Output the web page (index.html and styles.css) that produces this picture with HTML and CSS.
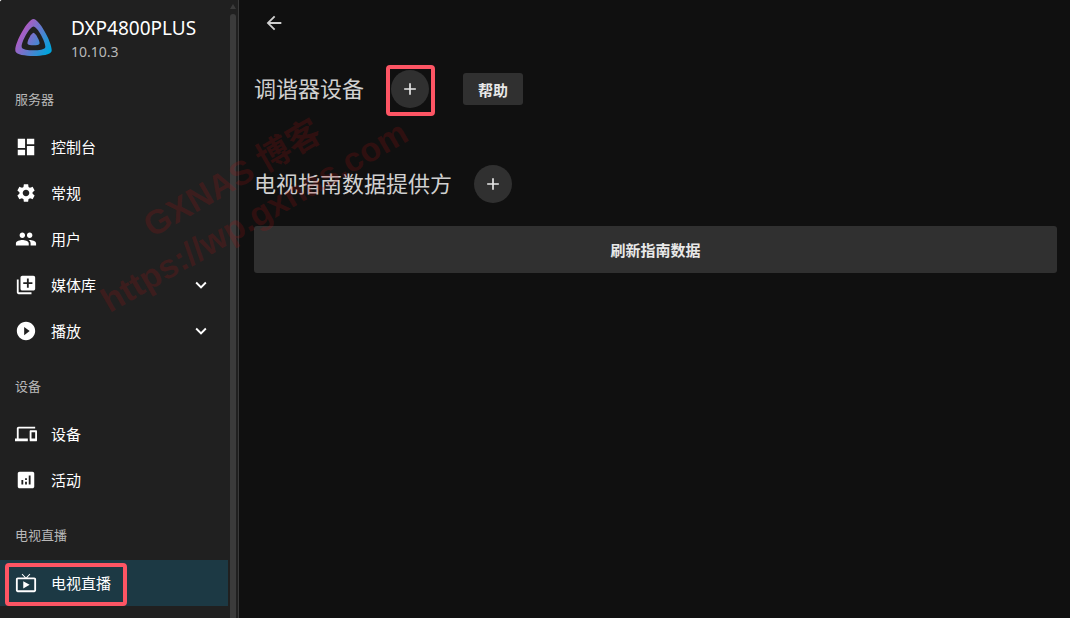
FILE: index.html
```html
<!DOCTYPE html>
<html lang="zh-CN">
<head>
  <meta charset="UTF-8" />
  <meta name="viewport" content="width=device-width, initial-scale=1.0" />
  <title>电视直播</title>
  <link rel="stylesheet" href="styles.css">
</head>
<body>
  <div class="app">
    <aside class="sidebar">
      <div class="drawer">
        <header class="server">
          <svg class="logo" viewBox="0 0 37 37" aria-hidden="true">
            <defs>
              <linearGradient id="brand" gradientUnits="userSpaceOnUse" x1="6" y1="16" x2="34" y2="32">
                <stop offset="0" stop-color="#aa5cc3" />
                <stop offset="1" stop-color="#00a4dc" />
              </linearGradient>
            </defs>
            <path fill="url(#brand)" fill-rule="evenodd" d="M18.500 0C24.500 0 38.500 26 36.500 32.500C34.500 38.500 2.500 38.500 .5 32.500C-1.500 26 12.500 0 18.500 0ZM18.500 7.500C14.500 7.500 5.500 24.500 6.800 28.500C8.100 32.300 28.900 32.300 30.200 28.500C31.500 24.500 22.500 7.500 18.500 7.500Z" />
            <path fill="url(#brand)" d="M18.500 13.800C20.500 13.800 25.200 22.500 24.500 24.700C23.800 26.700 13.200 26.700 12.500 24.700C11.800 22.500 16.500 13.800 18.500 13.800Z" />
          </svg>
          <div>
            <h1>DXP4800PLUS</h1>
            <p>10.10.3</p>
          </div>
        </header>

        <nav>
          <h3>服务器</h3>
          <a class="item" href="#dashboard">
            <svg class="icon" viewBox="0 0 24 24"><path d="M3 13h8V3H3v10zm0 8h8v-6H3v6zm10 0h8V11h-8v10zm0-18v6h8V3h-8z" /></svg>
            <span>控制台</span>
          </a>
          <a class="item" href="#general">
            <svg class="icon" viewBox="0 0 24 24"><path d="M19.140 12.940c.04-.3.06-.61.06-.94 0-.32-.02-.64-.07-.94l2.030-1.580c.18-.14.23-.41.12-.61l-1.920-3.320c-.12-.22-.37-.29-.59-.22l-2.390.96c-.5-.38-1.030-.7-1.620-.94l-.36-2.540c-.04-.24-.24-.41-.48-.41h-3.840c-.24 0-.43.17-.47.41l-.36 2.540c-.59.24-1.130.57-1.620.94l-2.390-.96c-.22-.08-.47 0-.59.22L2.740 8.870c-.12.21-.08.47.12.61l2.030 1.580c-.05.3-.09.63-.09.94s.02.64.07.94l-2.030 1.580c-.18.14-.23.41-.12.61l1.920 3.320c.12.22.37.29.59.22l2.390-.96c.5.38 1.030.7 1.620.94l.36 2.540c.05.24.24.41.48.41h3.840c.24 0 .44-.17.47-.41l.36-2.540c.59-.24 1.130-.56 1.620-.94l2.390.96c.22.08.47 0 .59-.22l1.920-3.320c.12-.22.07-.47-.12-.61l-2.010-1.580zM12 15.600c-1.980 0-3.600-1.620-3.600-3.600s1.620-3.600 3.600-3.600 3.600 1.620 3.600 3.600-1.620 3.600-3.600 3.600z" /></svg>
            <span>常规</span>
          </a>
          <a class="item" href="#users">
            <svg class="icon" viewBox="0 0 24 24"><path d="M16 11c1.660 0 2.990-1.340 2.990-3S17.660 5 16 5c-1.660 0-3 1.340-3 3s1.340 3 3 3zm-8 0c1.660 0 2.990-1.340 2.990-3S9.660 5 8 5C6.340 5 5 6.340 5 8s1.340 3 3 3zm0 2c-2.330 0-7 1.170-7 3.500V19h14v-2.500c0-2.330-4.670-3.500-7-3.500zm8 0c-.29 0-.62.02-.97.05 1.160.84 1.970 1.970 1.970 3.450V19h6v-2.500c0-2.330-4.670-3.500-7-3.500z" /></svg>
            <span>用户</span>
          </a>
          <a class="item" href="#libraries">
            <svg class="icon" viewBox="0 0 24 24"><path d="M4 6H2v14c0 1.100.9 2 2 2h14v-2H4V6zm16-4H8c-1.100 0-2 .9-2 2v12c0 1.100.9 2 2 2h12c1.100 0 2-.9 2-2V4c0-1.100-.9-2-2-2zm-1 9h-4v4h-2v-4H9V9h4V5h2v4h4v2z" /></svg>
            <span>媒体库</span>
            <svg class="chevron" viewBox="0 0 24 24"><path d="M16.590 8.590 12 13.170 7.410 8.590 6 10l6 6 6-6z" /></svg>
          </a>
          <a class="item" href="#playback">
            <svg class="icon" viewBox="0 0 24 24"><path d="M12 2C6.480 2 2 6.480 2 12s4.480 10 10 10 10-4.480 10-10S17.520 2 12 2zm-2 14.500v-9l6 4.500-6 4.500z" /></svg>
            <span>播放</span>
            <svg class="chevron" viewBox="0 0 24 24"><path d="M16.590 8.590 12 13.170 7.410 8.590 6 10l6 6 6-6z" /></svg>
          </a>
        </nav>

        <nav>
          <h3>设备</h3>
          <a class="item" href="#devices">
            <svg class="icon" viewBox="0 0 24 24"><path d="M4 6h18V4H4c-1.100 0-2 .9-2 2v11H0v3h14v-3H4V6zm19 2h-6c-.55 0-1 .45-1 1v10c0 .55.45 1 1 1h6c.55 0 1-.45 1-1V9c0-.55-.45-1-1-1zm-1 9h-4v-7h4v7z" /></svg>
            <span>设备</span>
          </a>
          <a class="item" href="#activity">
            <svg class="icon" viewBox="0 0 24 24"><path d="M19 3H5c-1.100 0-2 .9-2 2v14c0 1.100.9 2 2 2h14c1.100 0 2-.9 2-2V5c0-1.100-.9-2-2-2zM9 17H7v-5h2v5zm4 0h-2v-3h2v3zm0-5h-2v-2h2v2zm4 5h-2V7h2v10z" /></svg>
            <span>活动</span>
          </a>
        </nav>

        <nav>
          <h3>电视直播</h3>
          <a class="item selected" href="#livetv" aria-current="page">
            <svg class="icon" viewBox="0 0 24 24"><path d="M21 6h-7.590l3.290-3.290L16 2l-4 4-4-4-.7.710L10.590 6H3c-1.100 0-2 .89-2 2v12c0 1.100.9 2 2 2h18c1.100 0 2-.9 2-2V8c0-1.110-.9-2-2-2zm0 14H3V8h18v12zM9 10v8l7-4z" /></svg>
            <span>电视直播</span>
            <i class="mark mark-item"></i>
          </a>
        </nav>
      </div>
      <div class="scrollbar">
        <div class="scroll-arrow"></div>
        <div class="scroll-thumb"></div>
      </div>
    </aside>

    <main>
      <button class="back" type="button" aria-label="返回">
        <svg viewBox="0 0 24 24"><path d="M20 11H7.830l5.590-5.590L12 4l-8 8 8 8 1.410-1.410L7.830 13H20v-2z" /></svg>
      </button>

      <section class="row">
        <h2>调谐器设备</h2>
        <div class="add-wrap">
          <button class="add" type="button" aria-label="添加调谐器设备">
            <svg viewBox="0 0 24 24"><path d="M19 13h-6v6h-2v-6H5v-2h6V5h2v6h6v2z" /></svg>
          </button>
          <i class="mark mark-add"></i>
        </div>
        <button class="help" type="button">帮助</button>
      </section>

      <section class="row">
        <h2>电视指南数据提供方</h2>
        <button class="add" type="button" aria-label="添加电视指南数据提供方">
          <svg viewBox="0 0 24 24"><path d="M19 13h-6v6h-2v-6H5v-2h6V5h2v6h6v2z" /></svg>
        </button>
      </section>

      <button class="refresh" type="button">刷新指南数据</button>
    </main>

    <div class="watermark" aria-hidden="true">
      <p>GXNAS 博客</p>
      <p>https://wp.gxnas.com</p>
    </div>
  </div>
</body>
</html>
```

FILE: styles.css
```css
* {
  box-sizing: border-box;
}
html {
  background: white;
}
body {
  margin: 0;
  font-family: "Noto Sans", "Noto Sans CJK SC", sans-serif;
  font-size: 15px;
  color: #fff;
}
h1, h2, h3, p {
  margin: 0;
  font-weight: 400;
}
svg {
  display: block;
  fill: currentColor;
}
button {
  border: none;
  padding: 0;
  font: inherit;
  color: #e8e8e8;
  cursor: pointer;
}
.app {
  position: relative;
  display: flex;
  min-height: 100vh;
  background: #101010;
  border-top-left-radius: 3px;
  overflow: hidden;
}

/* sidebar */
.sidebar {
  display: flex;
  flex: 0 0 239px;
  background: #202020;
  border-right: 1px solid #3a3a3a;
}
.drawer {
  flex: 1;
  padding-bottom: 12px;
}
.server {
  display: flex;
  align-items: center;
  gap: 19px;
  height: 76px;
  padding-left: 15px;
}
.logo {
  width: 37px;
  height: 37px;
  margin-bottom: 2px;
}
.server h1 {
  font-size: 19px;
  line-height: 28px;
}
.server p {
  font-size: 14px;
  line-height: 20px;
  color: #b8b8b8;
}
nav + nav {
  margin-top: 9px;
}
nav h3 {
  padding: 0 0 2px 15px;
  font-size: 13px;
  line-height: 46px;
  color: #b8b8b8;
}
.item {
  position: relative;
  display: flex;
  align-items: center;
  height: 46px;
  padding: 0 16px 0 15px;
  color: #fff;
  text-decoration: none;
}
.item span {
  flex: 1;
  margin-left: 14px;
  padding-bottom: 2px;
}
.item.selected {
  background: #1c3944;
}
.icon,
.chevron {
  width: 22px;
  height: 22px;
}
.scrollbar {
  display: flex;
  flex-direction: column;
  width: 10px;
  padding: 4px 2px 0;
}
.scroll-arrow {
  width: 6px;
  height: 5px;
  margin-bottom: 5px;
  background: #3b3b3b;
  clip-path: polygon(50% 0, 100% 100%, 0 100%);
}
.scroll-thumb {
  flex: 1;
  background: #3b3b3b;
  border-radius: 3px 3px 0 0;
}

/* content */
main {
  flex: 1;
  padding: 12px 13px 12px 15px;
}
.back {
  display: block;
  margin-left: 9px;
  background: none;
  color: #d0d0d0;
}
.back svg {
  width: 22px;
  height: 22px;
}
.row {
  display: flex;
  align-items: center;
  height: 38px;
  margin-top: 36px;
}
.row + .row {
  margin-top: 57px;
}
.row h2 {
  margin-right: 22px;
  padding-bottom: 2px;
  font-size: 22px;
  line-height: 36px;
  color: #d0d0d0;
}
.add-wrap {
  position: relative;
  margin-left: 5px;
}
.add {
  display: grid;
  place-items: center;
  width: 38px;
  height: 38px;
  border-radius: 50%;
  background: #303030;
}
.add svg {
  width: 20px;
  height: 20px;
}
.help {
  height: 32px;
  margin-left: 34px;
  padding: 0 15px;
  border-radius: 3px;
  background: #303030;
  font-weight: 700;
}
.refresh {
  display: block;
  width: 100%;
  height: 47px;
  margin-top: 23px;
  border-radius: 3px;
  background: #303030;
  font-weight: 700;
}

/* highlight frames */
.mark {
  position: absolute;
  border: 4px solid #fd5564;
  border-radius: 4px;
  pointer-events: none;
}
.mark-item {
  top: 3px;
  left: 5px;
  width: 122px;
  height: 43px;
}
.mark-add {
  inset: -5px -6px -8px -5px;
}

.watermark {
  position: absolute;
  top: 153px;
  left: 33px;
  width: 420px;
  transform: rotate(-30deg);
  font-family: "Liberation Sans", "Noto Sans CJK SC", sans-serif;
  font-size: 34px;
  line-height: 44px;
  text-align: center;
  color: rgba(160, 20, 20, 0.22);
  pointer-events: none;
}
.watermark p {
  font-weight: 700;
}
```
